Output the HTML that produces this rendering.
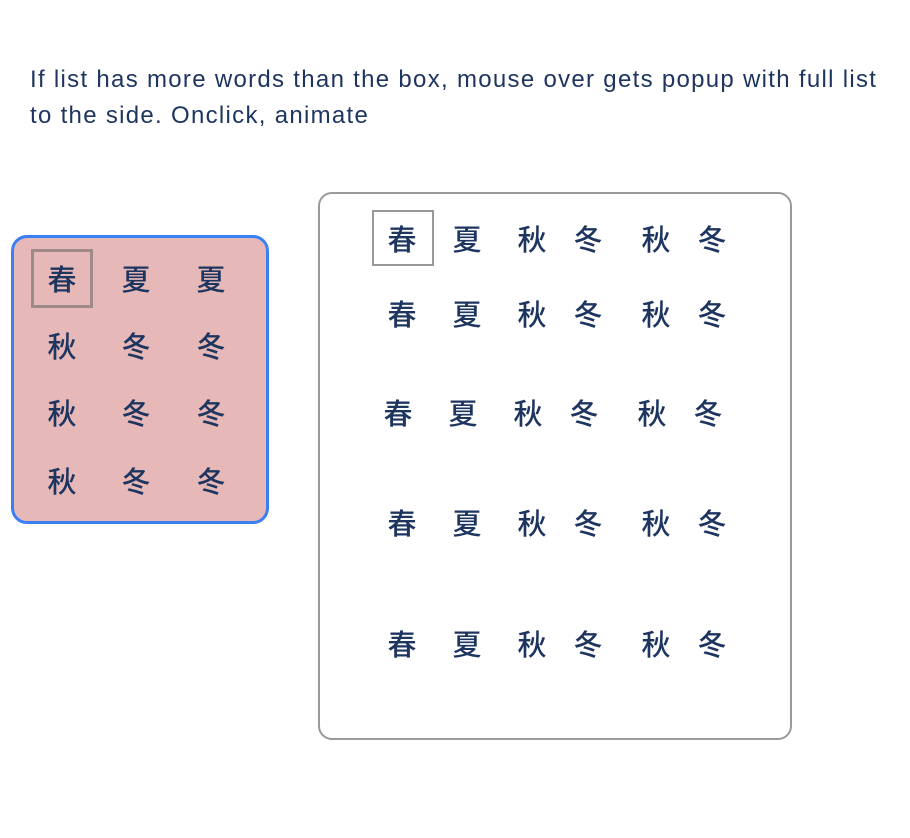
<!DOCTYPE html>
<html><head><meta charset="utf-8"><style>
body{margin:0;width:910px;height:838px;background:#fff;position:relative;overflow:hidden;font-family:"Liberation Sans","Noto Sans CJK SC",sans-serif;color:#1e3560}
.t{position:absolute;left:30px;top:62px;font-size:24px;line-height:36px;width:900px;letter-spacing:1.3px;white-space:nowrap}
.lb{position:absolute;left:11px;top:235px;width:252px;height:283px;border:3px solid #3b7ff5;border-radius:16px;background:#e6b8b8}
.rb{position:absolute;left:318px;top:192px;width:470px;height:544px;border:2px solid #9a9a9a;border-radius:14px}
.c{position:absolute;width:40px;height:40px;margin:-20px 0 0 -20px;text-align:center;line-height:40px;font-size:29px;font-family:"Noto Sans CJK SC",sans-serif;font-weight:500;color:#1e3560}
.h{position:absolute;box-sizing:border-box}
</style></head><body>
<div class="t">If list has more words than the box, mouse over gets popup with full list<br>to the side. Onclick, animate</div>
<div class="lb"></div>
<div class="h" style="left:31px;top:249px;width:62px;height:59px;border:3px solid #9e8a8a"></div>
<div class="rb"></div>
<div class="h" style="left:372px;top:210px;width:62px;height:56px;border:2px solid #999"></div>
<div id="g"></div>
<script>
var g=document.getElementById('g'),h='';
function c(x,y,s){h+='<div class="c" style="left:'+x+'px;top:'+y+'px">'+s+'</div>';}
var L=[['春','夏','夏'],['秋','冬','冬'],['秋','冬','冬'],['秋','冬','冬']],ly=[278,345,412,480],lx=[62,136,211];
for(var r=0;r<4;r++)for(var k=0;k<3;k++)c(lx[k],ly[r],L[r][k]);
var W=['春','夏','秋','冬','秋','冬'],rx=[402,467,532,588,656,712],ry=[238,313,412,522,643];
for(var r=0;r<5;r++)for(var k=0;k<6;k++)c(rx[k]-(r==2?4:0),ry[r],W[k]);
g.innerHTML=h;
</script>
</body></html>
